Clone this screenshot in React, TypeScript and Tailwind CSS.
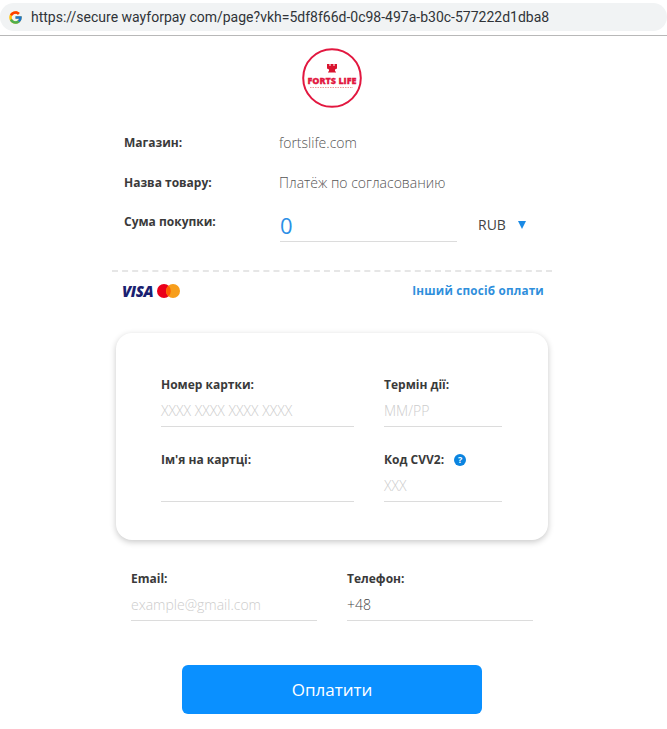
import { FcGoogle } from "react-icons/fc"

function Label(props: { text: string; className?: string }) {
    return <div className={`text-[12px] leading-[16px] font-bold text-[#3a3a3a] ${props.className ?? ""}`}>{props.text}</div>
}

function Field(props: { label: string; value?: string; dark?: boolean; help?: boolean; className: string }) {
    return (
        <div className={props.className}>
            <div className="flex items-center gap-[10px] h-[16px]">
                <Label text={props.label} />
                {props.help && (
                    <div className="w-[12px] h-[12px] rounded-full bg-[#0a84e0] text-white text-[9px] leading-[12px] font-bold text-center">?</div>
                )}
            </div>
            <div className={`mt-[6px] h-[28px] pt-[2px] border-b border-[#dcdcdc] text-[14px] leading-[20px] font-light ${props.dark ? "text-[#444]" : "text-[#cccccc]"}`}>
                {props.value}
            </div>
        </div>
    )
}

function InfoRow(props: { label: string; value: string; className?: string }) {
    return (
        <div className={`flex items-center h-[20px] pl-[12px] ${props.className ?? ""}`}>
            <Label text={props.label} className="w-[155px]" />
            <div className="text-[14px] leading-[20px] font-light text-[#555]">{props.value}</div>
        </div>
    )
}

function Logo() {
    return (
        <svg width="60" height="60" viewBox="0 0 60 60" className="block">
            <circle cx="30" cy="30" r="28.8" fill="#fff" stroke="#e2173f" strokeWidth="2" />
            <path d="M25 16h2.500v2h1v-2h3v2h1v-2h2.500v4.500l-2 1v2h1v1h-8v-1h1v-2l-2-1z" fill="#d9142f" />
            <text x="30" y="36" textAnchor="middle" fontSize="9" fontWeight="800" fill="#e2173f" stroke="#e2173f" strokeWidth="0.3" fontFamily="'Open Sans', sans-serif">FORTS LIFE</text>
            <line x1="8" y1="39.500" x2="51" y2="39.500" stroke="#e99" strokeWidth="1" strokeDasharray="1.500 1" />
        </svg>
    )
}

export default function App() {
    return (
        <div className="w-[667px] h-[729px] bg-white overflow-hidden font-['Open_Sans',sans-serif]">
            <div className="h-[36px] bg-white border-b border-[#b8b8b8] pt-[3px]">
                <div className="h-[28px] bg-[#f1f3f4] rounded-[14px] flex items-center pl-[8px] gap-[8px]">
                    <FcGoogle className="w-[15px] h-[15px]" />
                    <div className="font-['Roboto',sans-serif] text-[14px] text-[#303338] whitespace-nowrap">https://secure wayforpay com/page?vkh=5df8f66d-0c98-497a-b30c-577222d1dba8</div>
                </div>
            </div>

            <div className="w-[440px] ml-[112px]">
                <div className="flex justify-center pt-[12px]">
                    <Logo />
                </div>

                <InfoRow label="Магазин:" value="fortslife.com" className="mt-[25px]" />
                <InfoRow label="Назва товару:" value="Платёж по согласованию" className="mt-[20px]" />

                <div className="flex items-start pl-[12px] mt-[21px] h-[28px]">
                    <Label text="Сума покупки:" className="w-[156px]" />
                    <div className="w-[177px] h-[28px] border-b border-[#dcdcdc] text-[22px] leading-[22px] text-[#2b8fe6] font-medium">0</div>
                    <div className="ml-[21px] text-[14px] leading-[22px] font-normal text-[#444]">RUB</div>
                    <div className="ml-[12px] mt-[7px] w-0 h-0 border-x-[4px] border-x-transparent border-t-[8px] border-t-[#1a8ae5]" />
                </div>

                <div className="mt-[28px] border-t-2 border-dashed border-[#e6e6e6]" />

                <div className="flex items-center justify-between h-[20px] mt-[9px] pl-[10px] pr-[8px]">
                    <div className="flex items-center gap-[4px]">
                        <span className="text-[15px] leading-[20px] font-extrabold italic text-[#1a1f71] tracking-[-0.4px]">VISA</span>
                        <svg width="23" height="14" viewBox="0 0 23 14">
                            <circle cx="7" cy="7" r="7" fill="#eb001b" />
                            <circle cx="16" cy="7" r="7" fill="#f79e1b" />
                            <path d="M11.500 1.800a7 7 0 0 1 0 10.400a7 7 0 0 1 0-10.400z" fill="#ff5f00" />
                        </svg>
                    </div>
                    <div className="text-[11.700px] font-bold text-[#2f8fdc] tracking-[0.2px]">Інший спосіб оплати</div>
                </div>

                <div className="mt-[32px] ml-[4px] w-[432px] h-[207px] rounded-[16px] bg-white shadow-[0_2px_6px_rgba(0,0,0,0.22)] pt-[44px] pl-[45px]">
                    <div className="flex">
                        <Field label="Номер картки:" value="XXXX XXXX XXXX XXXX" className="w-[193px]" />
                        <Field label="Термін дії:" value="MM/PP" className="w-[118px] ml-[30px]" />
                    </div>
                    <div className="flex mt-[25px]">
                        <Field label="Ім'я на картці:" className="w-[193px]" />
                        <Field label="Код CVV2:" value="XXX" help className="w-[118px] ml-[30px]" />
                    </div>
                </div>

                <div className="flex mt-[31px] ml-[19px]">
                    <Field label="Email:" value="example@gmail.com" className="w-[186px]" />
                    <Field label="Телефон:" value="+48" dark className="w-[186px] ml-[30px]" />
                </div>

                <div className="flex justify-center mt-[44px]">
                    <button className="w-[300px] h-[49px] rounded-[6px] bg-[#0a90ff] text-white text-[17px] font-normal">Оплатити</button>
                </div>
            </div>
        </div>
    )
}
